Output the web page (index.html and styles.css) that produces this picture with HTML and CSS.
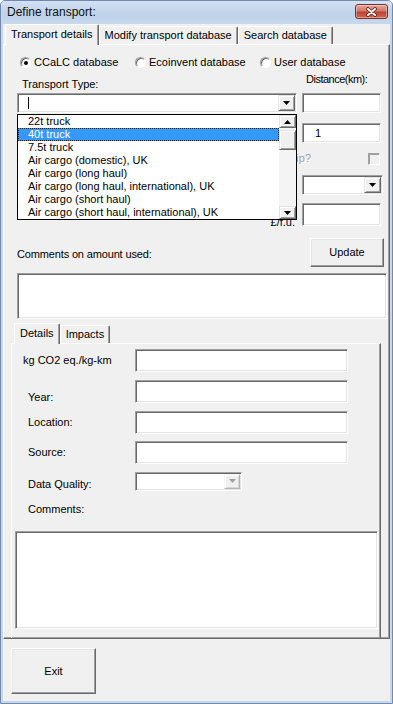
FILE: index.html
```html
<!DOCTYPE html>
<html lang="en">
<head>
    <meta charset="UTF-8">
    <meta name="viewport" content="width=device-width, initial-scale=1.0">
    <title>Define transport</title>
    <link rel="stylesheet" href="styles.css">
</head>
<body>
    <div class="window">
        <div class="titlebar">
            <span class="title">Define transport:</span>
            <div class="close-btn">
                <svg width="13" height="10" viewBox="0 0 13 10">
                    <path d="M3 2 L10 8 M10 2 L3 8" stroke="#5b2019" stroke-width="3.6" stroke-linecap="round"/>
                    <path d="M3 2 L10 8 M10 2 L3 8" stroke="#fff" stroke-width="2" stroke-linecap="round"/>
                </svg>
            </div>
        </div>

        <div class="client">
            <div class="tabs">
                <div class="tab active">Transport details</div>
                <div class="tab">Modify transport database</div>
                <div class="tab">Search database</div>
            </div>

            <div class="panel">
                <div class="source-row">
                    <div class="opt"><span class="radio checked"></span>CCaLC database</div>
                    <div class="opt"><span class="radio"></span>Ecoinvent database</div>
                    <div class="opt"><span class="radio"></span>User database</div>
                </div>

                <div class="transport-grid">
                    <div class="lbl type-lbl">Transport Type:</div>
                    <div class="lbl dist-lbl">Distance(km):</div>

                    <div class="combo type-combo">
                        <span class="caret"></span>
                        <span class="drop-btn">
                            <svg width="7" height="4" viewBox="0 0 7 4"><polygon points="0,0 7,0 3.5,4" fill="#000"/></svg>
                        </span>
                        <div class="dropdown">
                            <ul class="items">
                                <li>22t truck</li>
                                <li class="selected">40t truck</li>
                                <li>7.5t truck</li>
                                <li>Air cargo (domestic), UK</li>
                                <li>Air cargo (long haul)</li>
                                <li>Air cargo (long haul, international), UK</li>
                                <li>Air cargo (short haul)</li>
                                <li>Air cargo (short haul, international), UK</li>
                            </ul>
                            <div class="scrollbar">
                                <span class="sb-btn">
                                    <svg width="7" height="4" viewBox="0 0 7 4"><polygon points="0,4 7,4 3.5,0" fill="#000"/></svg>
                                </span>
                                <span class="sb-track"><span class="sb-thumb"></span></span>
                                <span class="sb-btn">
                                    <svg width="7" height="4" viewBox="0 0 7 4"><polygon points="0,0 7,0 3.5,4" fill="#000"/></svg>
                                </span>
                            </div>
                        </div>
                    </div>
                    <div class="textbox"></div>

                    <div></div>
                    <div class="textbox value">1</div>

                    <div class="trip-row">
                        <span class="disabled-text">Round trip?</span>
                        <span class="checkbox"></span>
                    </div>

                    <div></div>
                    <div class="combo unit-combo">
                        <span class="drop-btn">
                            <svg width="7" height="4" viewBox="0 0 7 4"><polygon points="0,0 7,0 3.5,4" fill="#000"/></svg>
                        </span>
                    </div>

                    <div class="lbl fu-lbl">£/f.u.</div>
                    <div class="textbox fu-box"></div>
                </div>

                <div class="comments-head">
                    <div class="lbl">Comments on amount used:</div>
                    <button class="btn update-btn">Update</button>
                </div>
                <div class="textbox comments-box"></div>

                <div class="details">
                    <div class="tabs inner-tabs">
                        <div class="tab active">Details</div>
                        <div class="tab">Impacts</div>
                    </div>
                    <div class="inner-panel">
                        <div class="details-grid">
                            <div class="lbl kg-lbl">kg CO2 eq./kg-km</div>
                            <div class="textbox"></div>

                            <div class="lbl year-lbl">Year:</div>
                            <div class="textbox"></div>

                            <div class="lbl">Location:</div>
                            <div class="textbox"></div>

                            <div class="lbl">Source:</div>
                            <div class="textbox"></div>

                            <div class="lbl dq-lbl">Data Quality:</div>
                            <div class="combo dq-combo">
                                <span class="drop-btn off">
                                    <svg width="7" height="4" viewBox="0 0 7 4"><polygon points="0,0 7,0 3.5,4" fill="#a0a0a0"/></svg>
                                </span>
                            </div>

                            <div class="lbl comments-lbl">Comments:</div>
                        </div>
                        <div class="textbox big-box"></div>
                    </div>
                </div>
            </div>

            <div class="footer">
                <button class="btn exit-btn">Exit</button>
            </div>
        </div>
    </div>
</body>
</html>
```

FILE: styles.css
```css
* {
    box-sizing: border-box;
}

body {
    margin: 0;
    font-family: "Liberation Sans", Arial, sans-serif;
    font-size: 11px;
    line-height: 13px;
    color: #000;
    background: #fff;
}

.window {
    width: 393px;
    height: 704px;
    display: flex;
    flex-direction: column;
    background: #c6d8ee;
    border: 1px solid #7189ac;
    border-radius: 5px 5px 0 0;
    padding: 0 2px 2px;
}

/* title bar */
.titlebar {
    height: 23px;
    flex: none;
    display: flex;
    justify-content: space-between;
    align-items: center;
    margin: 0 -2px;
    padding: 0 4px 0 6px;
    border-radius: 4px 4px 0 0;
    background: linear-gradient(#d3e1f2, #bfd2ea 55%, #c6d8ee);
}

.title {
    font-size: 12px;
    color: #111;
}

.close-btn {
    align-self: flex-start;
    margin-top: 3px;
    width: 33px;
    height: 15px;
    display: flex;
    justify-content: center;
    align-items: center;
    border: 1px solid #7b3128;
    border-radius: 3px;
    background: linear-gradient(#e3a99d, #d2786a 45%, #c0402f 55%, #cd6a55);
    box-shadow: inset 0 0 0 1px rgba(255, 255, 255, 0.35);
}

.client {
    flex: 1;
    display: flex;
    flex-direction: column;
    background: #f0f0f0;
}

/* tabs */
.tabs {
    height: 20px;
    flex: none;
    display: flex;
    align-items: flex-end;
    padding-left: 2px;
    position: relative;
    z-index: 1;
}

.tab {
    height: 18px;
    padding: 2px 5px 0;
    border: 1px solid #fff;
    border-bottom: 0;
    border-right-color: #696969;
    border-radius: 2px 2px 0 0;
    box-shadow: inset -1px 0 #a0a0a0;
    white-space: nowrap;
}

.tab.active {
    height: 21px;
    margin-bottom: -1px;
    padding-top: 3px;
    background: #f0f0f0;
}

.panel {
    height: 595px;
    flex: none;
    overflow: hidden;
    padding: 10px 2px 0 13px;
    border: 1px solid #fff;
    border-right-color: #696969;
    border-bottom-color: #696969;
    box-shadow: inset -1px -1px #a0a0a0;
}

/* database radios */
.source-row {
    height: 14px;
    display: flex;
    align-items: center;
    padding-left: 3px;
}

.opt {
    display: flex;
    align-items: center;
    gap: 3px;
}

.opt:nth-child(1) {
    width: 115px;
}

.opt:nth-child(2) {
    width: 125px;
}

.radio {
    width: 11px;
    height: 11px;
    position: relative;
    border-radius: 50%;
    background: #fff;
    border: 1px solid;
    border-color: #a0a0a0 #fff #fff #a0a0a0;
    box-shadow: inset 1px 1px #696969, 0 0 0 0.5px #e3e3e3;
}

.radio.checked::after {
    content: "";
    position: absolute;
    left: 3px;
    top: 3px;
    width: 4px;
    height: 4px;
    border-radius: 50%;
    background: #000;
}

/* controls */
.textbox {
    background: #fff;
    border: 1px solid;
    border-color: #a0a0a0 #fff #fff #a0a0a0;
    box-shadow: inset 1px 1px #696969, inset -1px -1px #e3e3e3;
}

.combo {
    display: flex;
    justify-content: space-between;
    align-items: center;
    padding: 0 1px 0 10px;
    background: #fff;
    border: 1px solid;
    border-color: #a0a0a0 #fff #fff #a0a0a0;
    box-shadow: inset 1px 1px #696969, inset -1px -1px #e3e3e3;
}

.drop-btn {
    width: 17px;
    height: 16px;
    margin-left: auto;
    display: flex;
    justify-content: center;
    align-items: center;
    background: #f0f0f0;
    border: 1px solid;
    border-color: #e3e3e3 #696969 #696969 #e3e3e3;
    box-shadow: inset 1px 1px #fff, inset -1px -1px #a0a0a0;
}

.drop-btn.off {
    width: 16px;
    height: 15px;
    border-color: #f4f4f4 #b4b4b4 #b4b4b4 #f4f4f4;
    box-shadow: inset 1px 1px #fff, inset -1px -1px #d8d8d8;
}

.btn {
    font: inherit;
    color: #000;
    padding: 0;
    background: #f0f0f0;
    border: 1px solid;
    border-color: #fff #696969 #696969 #fff;
    box-shadow: inset -1px -1px #a0a0a0, inset 1px 1px #e3e3e3;
}

.checkbox {
    width: 12px;
    height: 12px;
    background: #f0f0f0;
    border: 1px solid;
    border-color: #a0a0a0 #fff #fff #a0a0a0;
    box-shadow: inset 1px 1px #a0a0a0;
}

/* transport type block */
.transport-grid {
    display: grid;
    grid-template-columns: 280px 79px;
    grid-template-rows: 24px 20px 30px 22px 30px 31px;
    column-gap: 5px;
    align-items: end;
}

.type-lbl {
    padding-left: 5px;
    margin-bottom: 2px;
}

.dist-lbl {
    padding-left: 4px;
    margin-bottom: 7px;
    white-space: nowrap;
    letter-spacing: -0.5px;
}

.type-combo {
    height: 20px;
    position: relative;
}

.caret {
    width: 1px;
    height: 12px;
    background: #000;
}

.textbox {
    height: 20px;
}

.value {
    display: flex;
    align-items: center;
    padding-left: 12px;
}

.trip-row {
    grid-column: 1 / -1;
    height: 13px;
    display: flex;
    justify-content: flex-end;
    align-items: center;
    padding-right: 1px;
}

.disabled-text {
    color: #a0a0a0;
    text-shadow: 1px 1px #fff;
    margin-right: 57px;
}

.unit-combo {
    width: 81px;
    height: 20px;
}

.fu-lbl {
    justify-self: end;
    margin-bottom: -3px;
    padding-right: 2px;
}

.fu-box {
    height: 23px;
}

/* open list of the transport combo */
.dropdown {
    position: absolute;
    top: 20px;
    left: -1px;
    z-index: 5;
    width: 280px;
    height: 106px;
    display: flex;
    background: #fff;
    border: 1px solid #000;
}

.items {
    flex: 1;
    margin: 0;
    padding: 0;
    list-style: none;
    overflow: hidden;
}

.items li {
    height: 13px;
    padding-left: 10px;
    white-space: nowrap;
}

.items li.selected {
    background: #3399ff;
    color: #fff;
    outline: 1px dotted #222;
    outline-offset: -1px;
}

.scrollbar {
    width: 17px;
    display: flex;
    flex-direction: column;
    background: #f4f4f4;
}

.sb-btn,
.sb-thumb {
    display: flex;
    justify-content: center;
    align-items: center;
    background: #f0f0f0;
    border: 1px solid;
    border-color: #e3e3e3 #696969 #696969 #e3e3e3;
    box-shadow: inset 1px 1px #fff, inset -1px -1px #a0a0a0;
}

.sb-btn {
    height: 13px;
}

.sb-track {
    flex: 1;
    display: flex;
    flex-direction: column;
}

.sb-thumb {
    height: 20px;
    margin-top: 2px;
}

/* comments on amount */
.comments-head {
    height: 29px;
    margin-top: 12px;
    display: flex;
    justify-content: space-between;
}

.comments-head .lbl {
    align-self: flex-end;
    margin-bottom: 6px;
    letter-spacing: -0.15px;
}

.update-btn {
    width: 74px;
    margin-right: 3px;
}

.comments-box {
    height: 46px;
    margin-top: 6px;
}

/* details sub tabs */
.details {
    width: 370px;
    margin-left: -6px;
}

.inner-tabs {
    margin-top: 4px;
    padding-left: 3px;
}

.inner-panel {
    height: 320px;
    padding-top: 5px;
    border: 1px solid #fff;
    border-right-color: #696969;
    border-bottom-color: #696969;
    box-shadow: inset -1px -1px #a0a0a0;
}

.details-grid {
    display: grid;
    grid-template-columns: 123px 213px;
    grid-auto-rows: auto;
    row-gap: 7px;
    align-items: center;
}

.details-grid .textbox {
    height: 23px;
}

.details-grid .lbl {
    padding-left: 16px;
}

.details-grid .kg-lbl {
    padding-left: 11px;
}

.details-grid .year-lbl {
    margin-top: 12px;
}

.details-grid .dq-lbl {
    margin-top: 7px;
}

.dq-combo {
    width: 107px;
    height: 19px;
}

.details-grid .comments-lbl {
    grid-column: 1 / -1;
    margin-top: 5px;
}

.big-box {
    width: 363px;
    height: 98px;
    margin: 15px 0 0 3px;
}

/* bottom */
.footer {
    flex: 1;
    padding: 9px 0 0 8px;
}

.exit-btn {
    width: 85px;
    height: 46px;
}
```
